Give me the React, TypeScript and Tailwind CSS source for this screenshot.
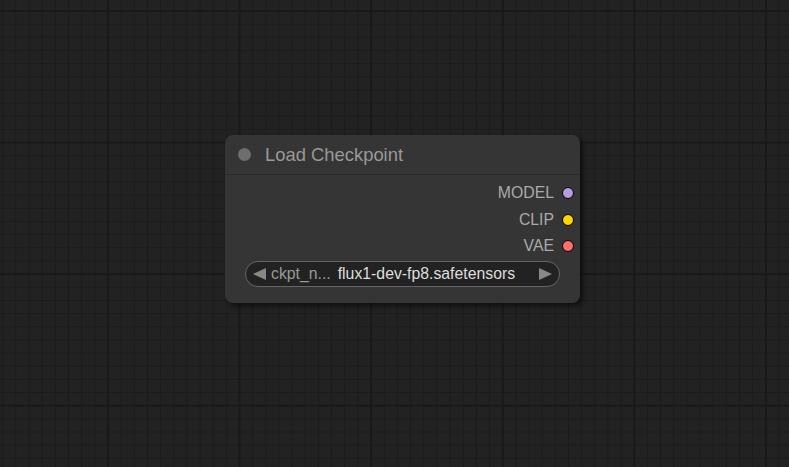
const outputs = [
  { name: "MODEL", color: "bg-[#b39ddb]" },
  { name: "CLIP", color: "bg-[#ffd500]" },
  { name: "VAE", color: "bg-[#ff6e6e]" },
];

function Arrow({ dir }: { dir: "left" | "right" }) {
  return (
    <svg width="13" height="12" viewBox="0 0 13 12" className="shrink-0">
      {dir === "left" ? (
        <polygon points="13,0 13,12 0,6" fill="#888" />
      ) : (
        <polygon points="0,0 0,12 13,6" fill="#888" />
      )}
    </svg>
  );
}

export default function App() {
  return (
    <div
      className="relative h-[467px] w-[789px] overflow-hidden bg-[#222222] [background-image:linear-gradient(to_right,#191919_0_2px,transparent_2px),linear-gradient(to_bottom,#191919_0_2px,transparent_2px),linear-gradient(to_right,#1b1b1b_0_1px,transparent_1px),linear-gradient(to_bottom,#1b1b1b_0_1px,transparent_1px)] [background-size:131.6px_131.6px,131.6px_131.6px,13.16px_13.16px,13.16px_13.16px] [background-position:107px_10px,107px_10px,107.5px_10.5px,107.5px_10.5px]"
      style={{ fontFamily: '"Liberation Sans", Arial, sans-serif' }}
    >
      {/* Node */}
      <div className="absolute left-[225px] top-[135px] flex h-[168px] w-[355px] flex-col rounded-[8px] bg-[#353535] shadow-[3px_3px_5px_rgba(0,0,0,0.55)]">
        {/* Title */}
        <div className="flex h-[40px] items-center border-b border-[#2a2a2a] pl-[13px]">
          <div className="h-[13px] w-[13px] rounded-full bg-[#6e6e6e]" />
          <span className="ml-[14px] pt-[1px] text-[18.4px] leading-none text-[#999]">
            Load Checkpoint
          </span>
        </div>

        {/* Outputs */}
        <div className="flex flex-col pt-[5px] pr-[6px]">
          {outputs.map((o) => (
            <div
              key={o.name}
              className="flex h-[26.5px] items-center justify-end gap-[8px]"
            >
              <span className="text-[15.8px] leading-none text-[#aaa]">
                {o.name}
              </span>
              <div
                className={`h-[12px] w-[12px] rounded-full border-[1.5px] border-black ${o.color}`}
              />
            </div>
          ))}
        </div>

        {/* Combo widget */}
        <div className="mx-[20px] mt-[1px] flex h-[26px] items-center rounded-full border border-[#666] bg-[#222] px-[7px]">
          <Arrow dir="left" />
          <span className="ml-[5px] text-[15.8px] leading-none text-[#999]">
            ckpt_n...
          </span>
          <span className="ml-[7px] text-[15.8px] leading-none text-[#ddd]">
            flux1-dev-fp8.safetensors
          </span>
          <div className="flex-1" />
          <Arrow dir="right" />
        </div>
      </div>
    </div>
  );
}
